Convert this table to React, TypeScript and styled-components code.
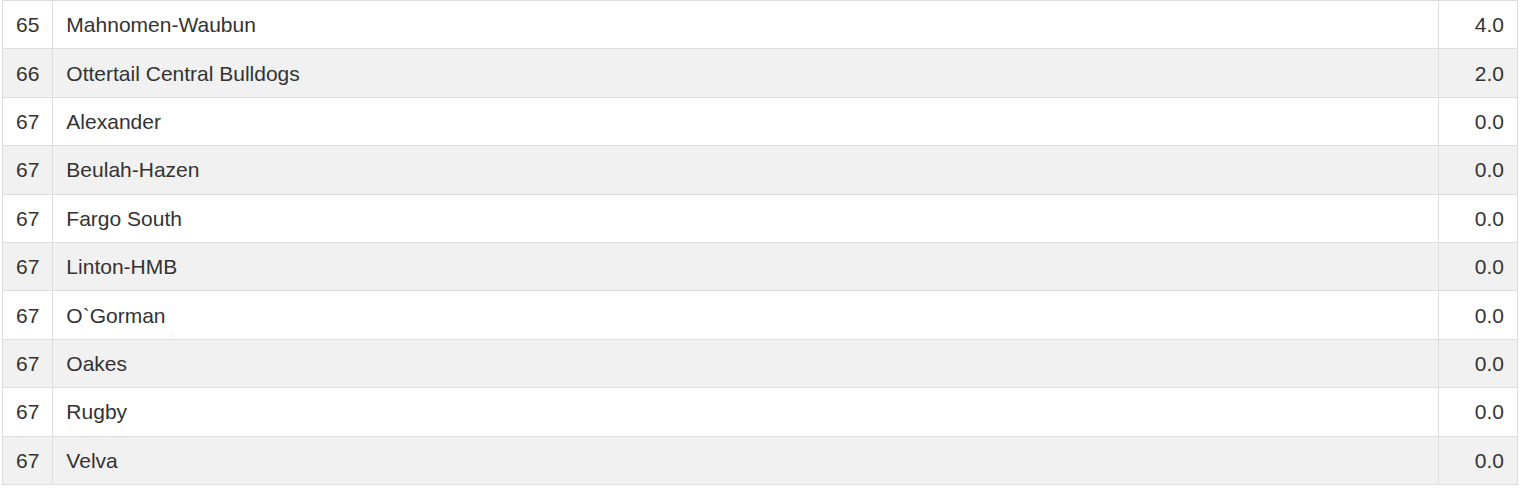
import React from "react";
import styled, { createGlobalStyle } from "styled-components";

const Global = createGlobalStyle`
  html, body { margin: 0; padding: 0; background: #fff; }
  body { font-family: "Liberation Sans", Arial, Helvetica, sans-serif; }
`;

const Page = styled.div`
  padding: 0 6px 0 2px;
`;

const Table = styled.table`
  width: 1516px;
  border-collapse: collapse;
  font-size: 21px;
  color: #333;
`;

const Row = styled.tr<{ $striped: boolean }>`
  background: ${(p) => (p.$striped ? "#f1f1f1" : "#fff")};
`;

const Cell = styled.td<{ $align?: "left" | "right"; $width?: number }>`
  border: 1px solid #ddd;
  height: 48.4px;
  padding: 0 13px 0 13px;
  box-sizing: border-box;
  text-align: ${(p) => p.$align ?? "left"};
  vertical-align: middle;
  line-height: 1;
  ${(p) => (p.$width ? `width: ${p.$width}px;` : "")}
`;

const rows: [string, string, string][] = [
  ["65", "Mahnomen-Waubun", "4.0"],
  ["66", "Ottertail Central Bulldogs", "2.0"],
  ["67", "Alexander", "0.0"],
  ["67", "Beulah-Hazen", "0.0"],
  ["67", "Fargo South", "0.0"],
  ["67", "Linton-HMB", "0.0"],
  ["67", "O`Gorman", "0.0"],
  ["67", "Oakes", "0.0"],
  ["67", "Rugby", "0.0"],
  ["67", "Velva", "0.0"],
];

export default function App() {
  return (
    <Page>
      <Global />
      <Table>
        <tbody>
          {rows.map(([rank, name, pts], i) => (
            <Row key={i} $striped={i % 2 === 1}>
              <Cell $width={50}>{rank}</Cell>
              <Cell>{name}</Cell>
              <Cell $align="right" $width={79}>{pts}</Cell>
            </Row>
          ))}
        </tbody>
      </Table>
    </Page>
  );
}
